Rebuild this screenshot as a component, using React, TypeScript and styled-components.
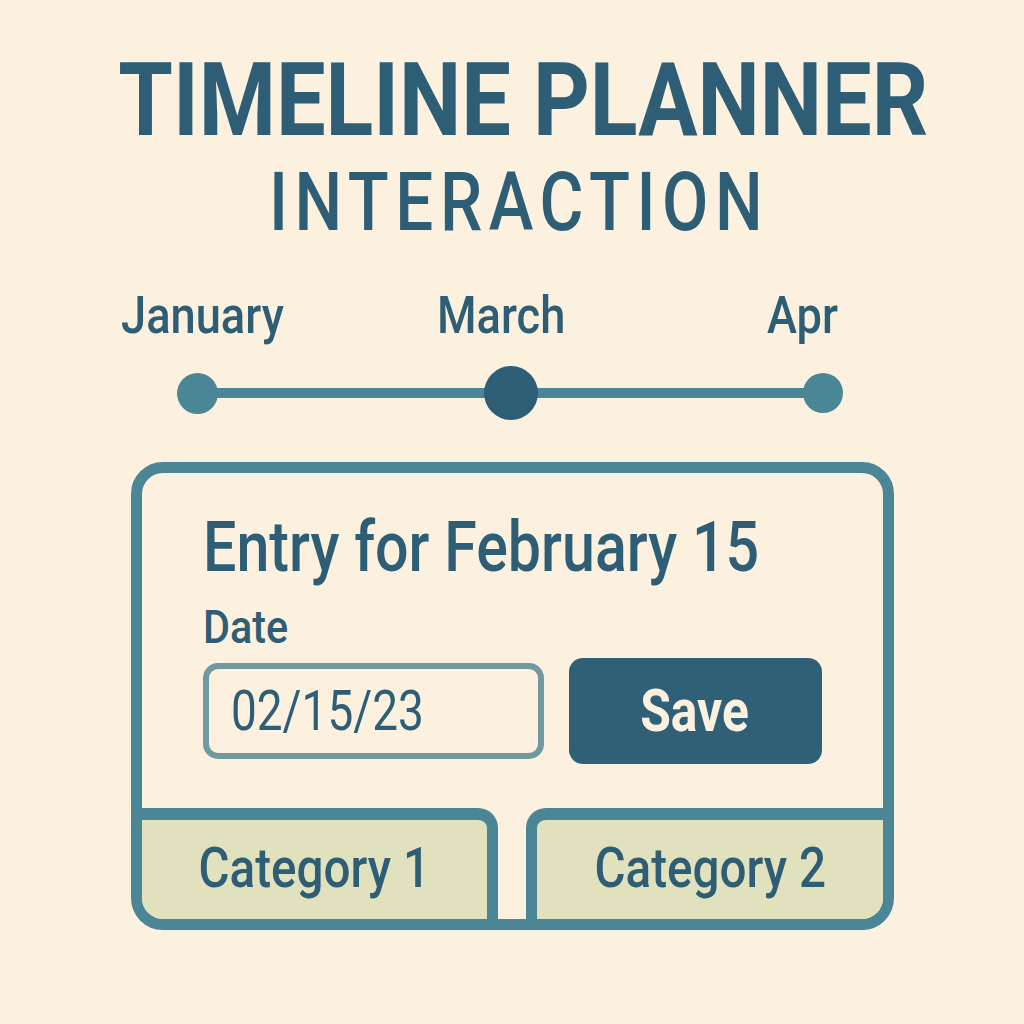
import React from "react";
import styled, { createGlobalStyle, css } from "styled-components";

const INK = "#2E5E76";
const TEAL = "#4A8696";
const CREAM = "#FBF1DE";
const OLIVE = "#E2E1BE";
const FONT = `Roboto, "Liberation Sans", sans-serif`;

const condensed = (scale: number, origin: "left" | "center") => css`
  display: inline-block;
  transform: scaleX(${scale});
  transform-origin: ${origin} center;
`;

const Global = createGlobalStyle`
  html, body {
    margin: 0;
    padding: 0;
    background: ${CREAM};
  }
  body {
    font-family: ${FONT};
    color: ${INK};
  }
`;

const Page = styled.div`
  width: 1024px;
  height: 1024px;
  display: flex;
  flex-direction: column;
  align-items: center;
  padding-top: 49px;
  box-sizing: border-box;
  background: ${CREAM};
`;

const Title = styled.h1`
  margin: 0 0 0 22px;
  font-family: ${FONT};
  font-weight: 700;
  font-size: 102px;
  line-height: 102px;
  color: ${INK};
  white-space: nowrap;
  ${condensed(0.865, "center")}
`;

const Subtitle = styled.h2`
  margin: 10px 0 0 15px;
  font-family: ${FONT};
  font-weight: 500;
  font-size: 82px;
  line-height: 82px;
  letter-spacing: 8px;
  color: ${INK};
  white-space: nowrap;
  ${condensed(0.82, "center")}
`;

const Months = styled.div`
  align-self: stretch;
  margin-top: 47px;
  padding-left: 121px;
  display: grid;
  grid-template-columns: 316px 330px auto;
`;

const Month = styled.span`
  font-family: ${FONT};
  font-weight: 500;
  font-size: 52px;
  line-height: 52px;
  color: ${INK};
  white-space: nowrap;
  ${condensed(0.87, "left")}
`;

const Track = styled.div`
  align-self: stretch;
  margin-top: 23px;
  padding-left: 177px;
  height: 56px;
  display: flex;
  align-items: center;
`;

const TrackInner = styled.div`
  width: 666px;
  display: flex;
  align-items: center;
`;

const Dot = styled.span<{ $size: number; $active?: boolean }>`
  flex: none;
  width: ${(p) => p.$size}px;
  height: ${(p) => p.$size}px;
  border-radius: 50%;
  background: ${(p) => (p.$active ? INK : TEAL)};
  position: relative;
  z-index: 1;
`;

const Line = styled.span`
  flex: 1;
  height: 10px;
  margin: 0 -2px;
  background: ${TEAL};
`;

const Card = styled.section`
  margin-top: 41px;
  width: 763px;
  box-sizing: border-box;
  border: 11px solid ${TEAL};
  border-radius: 32px;
  overflow: hidden;
  display: flex;
  flex-direction: column;
  background: ${CREAM};
`;

const CardBody = styled.div`
  padding: 39px 61px 44px;
  display: flex;
  flex-direction: column;
  align-items: flex-start;
`;

const Heading = styled.h3`
  margin: 0;
  font-family: ${FONT};
  font-weight: 500;
  font-size: 70px;
  line-height: 70px;
  color: ${INK};
  white-space: nowrap;
  ${condensed(0.845, "left")}
`;

const Label = styled.label`
  margin-top: 21px;
  font-family: ${FONT};
  font-weight: 500;
  font-size: 47px;
  line-height: 47px;
  color: ${INK};
  ${condensed(0.88, "left")}
`;

const FormRow = styled.div`
  margin-top: 8px;
  display: flex;
  align-items: center;
  gap: 25px;
`;

const DateField = styled.div`
  width: 341px;
  height: 96px;
  box-sizing: border-box;
  border: 6px solid #7199a2;
  border-radius: 15px;
  padding-left: 22px;
  display: flex;
  align-items: center;
`;

const DateValue = styled.span`
  font-family: ${FONT};
  font-weight: 400;
  font-size: 55px;
  line-height: 55px;
  color: ${INK};
  white-space: nowrap;
  ${condensed(0.835, "left")}
`;

const SaveButton = styled.button`
  width: 253px;
  height: 106px;
  border: none;
  border-radius: 14px;
  background: #2f6078;
  display: flex;
  align-items: center;
  justify-content: center;
  padding: 0;
`;

const SaveText = styled.span`
  font-family: ${FONT};
  font-weight: 700;
  font-size: 60px;
  line-height: 60px;
  color: ${CREAM};
  ${condensed(0.83, "center")}
`;

const Tabs = styled.div`
  display: grid;
  grid-template-columns: 1fr 1fr;
  column-gap: 28px;
`;

const Tab = styled.div<{ $side: "left" | "right" }>`
  height: 111px;
  box-sizing: border-box;
  background: ${OLIVE};
  border-top: 12px solid ${TEAL};
  ${(p) =>
    p.$side === "left"
      ? `border-right: 11px solid ${TEAL}; border-top-right-radius: 20px;`
      : `border-left: 11px solid ${TEAL}; border-top-left-radius: 20px;`}
  display: flex;
  align-items: center;
  justify-content: center;
  padding-bottom: 4px;
`;

const TabText = styled.span`
  font-family: ${FONT};
  font-weight: 500;
  font-size: 56px;
  line-height: 56px;
  color: ${INK};
  white-space: nowrap;
  ${condensed(0.85, "center")}
`;

export default function App() {
  return (
    <>
      <Global />
      <Page>
        <Title>TIMELINE PLANNER</Title>
        <Subtitle>INTERACTION</Subtitle>
        <Months>
          <Month>January</Month>
          <Month>March</Month>
          <Month>Apr</Month>
        </Months>
        <Track>
          <TrackInner>
            <Dot $size={41} />
            <Line />
            <Dot $size={54} $active />
            <Line />
            <Dot $size={40} />
          </TrackInner>
        </Track>
        <Card>
          <CardBody>
            <Heading>Entry for February 15</Heading>
            <Label>Date</Label>
            <FormRow>
              <DateField>
                <DateValue>02/15/23</DateValue>
              </DateField>
              <SaveButton>
                <SaveText>Save</SaveText>
              </SaveButton>
            </FormRow>
          </CardBody>
          <Tabs>
            <Tab $side="left">
              <TabText>Category 1</TabText>
            </Tab>
            <Tab $side="right">
              <TabText>Category 2</TabText>
            </Tab>
          </Tabs>
        </Card>
      </Page>
    </>
  );
}
